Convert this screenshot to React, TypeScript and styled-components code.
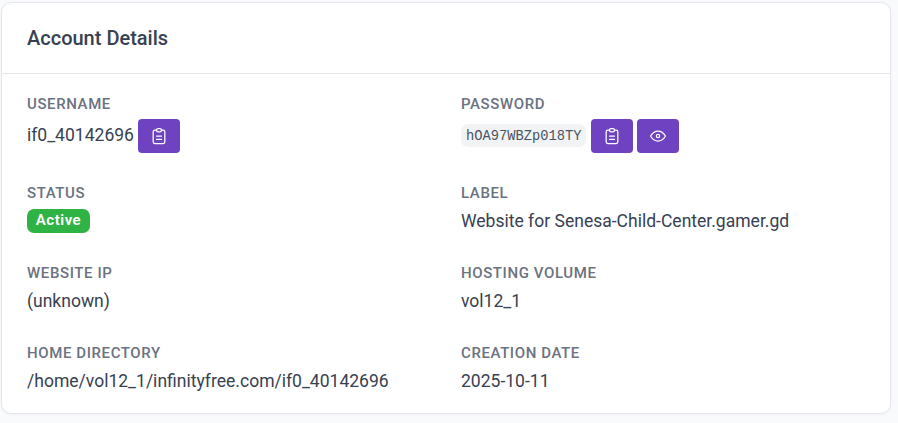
import React from "react";
import styled, { createGlobalStyle } from "styled-components";

const Global = createGlobalStyle`
  * { box-sizing: border-box; }
  body { margin: 0; background: #f9fafb; color: #374151; font: 400 17.54px/25px Roboto, sans-serif; overflow: hidden; }
`;
const Page = styled.main`height: 423px; padding: 2px 7px 0 1px;`;
const Card = styled.section`height: 412px; background: #fff; border: 1px solid #e4e6ec; border-radius: 10px; box-shadow: 0 1px 3px rgba(31,41,55,.03);`;
const Header = styled.header`height: 71px; padding: 0 25px; display: flex; align-items: center; border-bottom: 1px solid #e4e6ea;`;
const Title = styled.h3`margin: 0; font-size: 20px; line-height: 30px; font-weight: 500;`;
const Grid = styled.dl`margin: 0; padding: 21px 25px 0; display: grid; grid-template-columns: 410px 1fr; column-gap: 24px; grid-template-rows: 89px 80px 80px 60px;`;
const Item = styled.div`min-width: 0;`;
const Label = styled.dt`font-size: 15px; line-height: 18px; font-weight: 500; letter-spacing: .6px; color: #6b7280; text-transform: uppercase;`;
const Value = styled.dd`margin: 7px 0 0; white-space: nowrap;`;
const ButtonRow = styled(Value)`display: flex; align-items: center; height: 34px; gap: 4px; margin-top: 6px;`;
const Username = styled.span`padding-bottom: 2px;`;
const Button = styled.button`width: 42px; height: 34px; border: 0; border-radius: 4px; background: #6f42c1; color: #fff; padding: 0; display: grid; place-items: center;`;
const Code = styled.code`width: 125px; margin: 0 1px 1px 0; font: 13.75px/20px "Liberation Mono", monospace; color: #4b5563; background: #f1f3f5; border-radius: 7px; padding: 3px 5px 0;`;
const Badge = styled.span`display: block; width: 63px; height: 24px; border-radius: 7px; background: #2fb344; color: #fff; font-size: 15px; line-height: 23px; font-weight: 600; letter-spacing: .5px; text-align: center;`;
const Icon = styled.svg`width: 20px; height: 20px; fill: none; stroke: currentColor; stroke-width: 1.5; stroke-linecap: round; stroke-linejoin: round;`;

const Clipboard = () => <Icon viewBox="0 0 24 24"><path d="M9 5H7a2 2 0 0 0-2 2v12a2 2 0 0 0 2 2h10a2 2 0 0 0 2-2V7a2 2 0 0 0-2-2h-2M9 12h6M9 16h6"/><rect x="9" y="3" width="6" height="4" rx="2"/></Icon>;
const Eye = () => <Icon viewBox="0 0 24 24"><circle cx="12" cy="12" r="2"/><path d="M21 12c-2.4 4-5.4 6-9 6s-6.6-2-9-6c2.4-4 5.4-6 9-6s6.6 2 9 6"/></Icon>;

const Field = ({ label, children }: { label: string; children: React.ReactNode }) => (
  <Item><Label>{label}</Label><Value>{children}</Value></Item>
);

export default function App() {
  return <><Global/><Page><Card>
    <Header><Title>Account Details</Title></Header>
    <Grid>
      <Item><Label>Username</Label><ButtonRow><Username>if0_40142696</Username><Button aria-label="Copy username"><Clipboard/></Button></ButtonRow></Item>
      <Item><Label>Password</Label><ButtonRow><Code>hOA97WBZp018TY</Code><Button aria-label="Copy password"><Clipboard/></Button><Button aria-label="Show password"><Eye/></Button></ButtonRow></Item>
      <Field label="Status"><Badge>Active</Badge></Field>
      <Field label="Label">Website for Senesa-Child-Center.gamer.gd</Field>
      <Field label="Website IP">(unknown)</Field>
      <Field label="Hosting Volume">vol12_1</Field>
      <Field label="Home Directory">/home/vol12_1/infinityfree.com/if0_40142696</Field>
      <Field label="Creation Date">2025-10-11</Field>
    </Grid>
  </Card></Page></>;
}
